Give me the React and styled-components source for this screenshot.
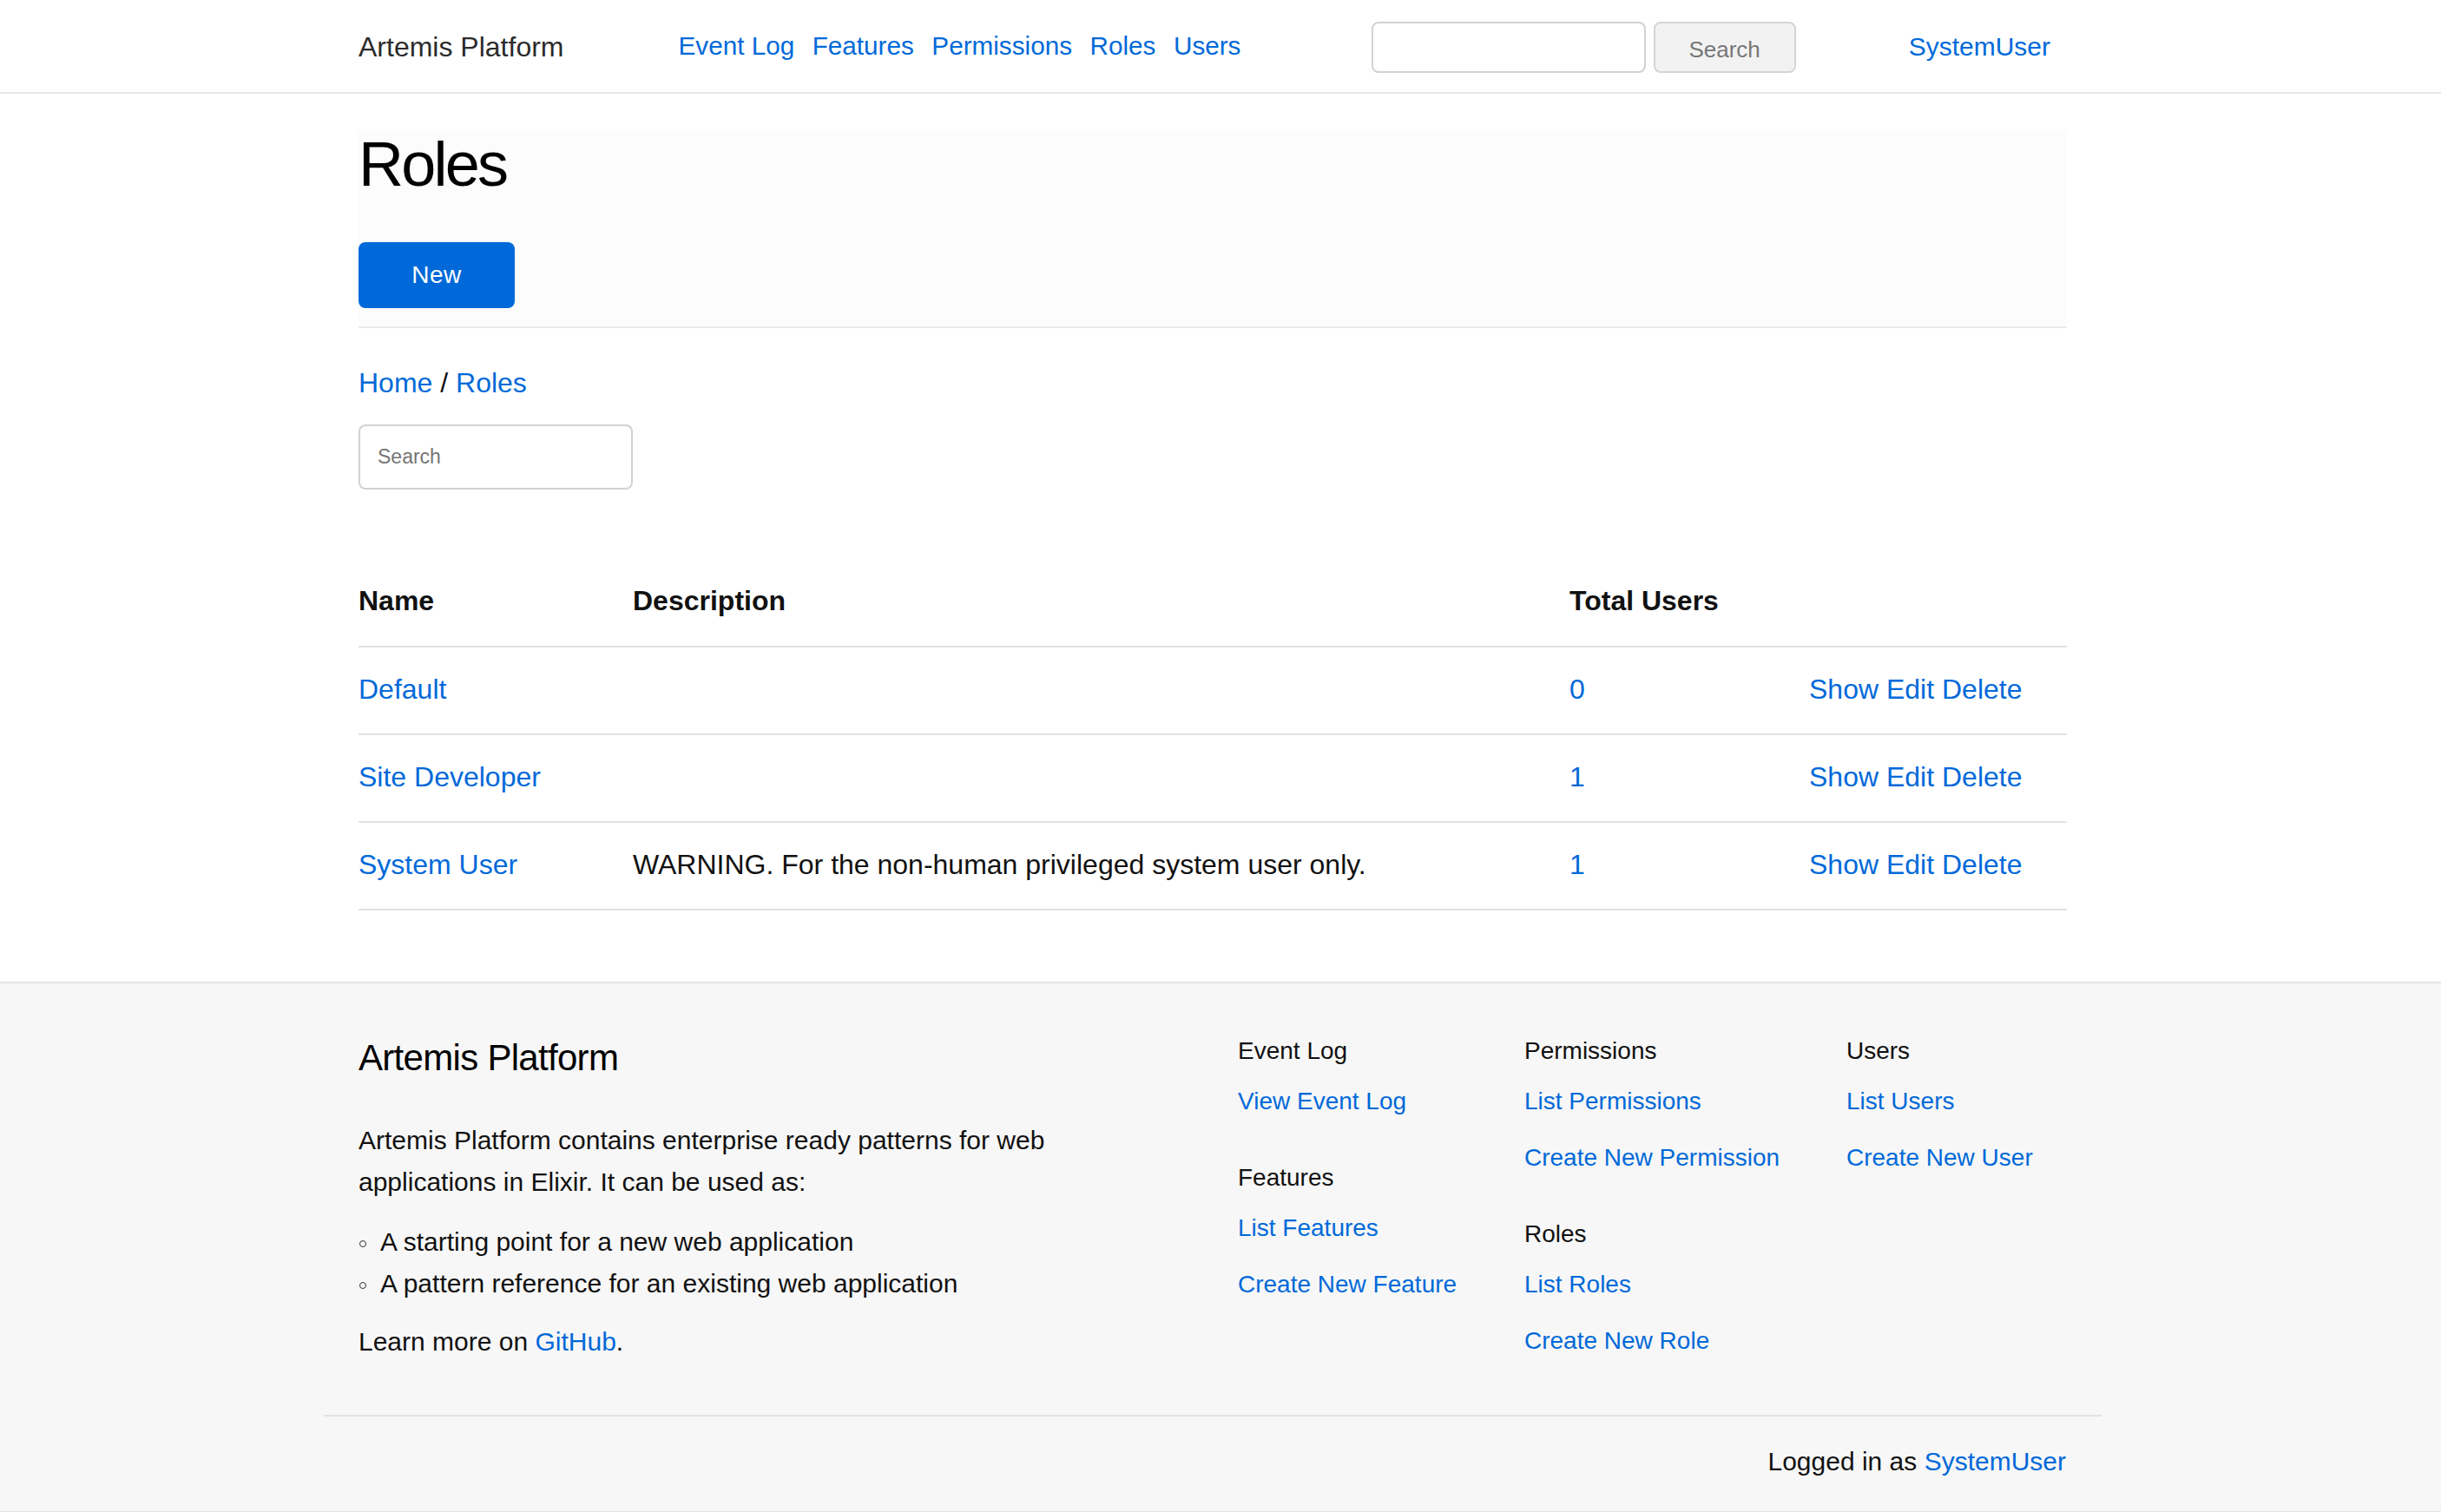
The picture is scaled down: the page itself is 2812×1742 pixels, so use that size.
import React from "react";
import styled, { createGlobalStyle } from "styled-components";

const BLUE = "#0069d9";

const GlobalStyle = createGlobalStyle`
  body {
    margin: 0;
    background: #fff;
    color: #111;
    font-family: "Liberation Sans", Arial, Helvetica, sans-serif;
  }
  * { box-sizing: border-box; }
  a { color: ${BLUE}; text-decoration: none; }
`;

const Band = styled.div`
  padding-right: 18px;
`;

const HeaderBar = styled(Band)`
  height: 108px;
  border-bottom: 2px solid #e6e6e6;
  background: #fff;
`;

const Container = styled.div`
  max-width: 2048px;
  margin: 0 auto;
  padding: 0 40px;
`;

const HeaderRow = styled(Container)`
  display: flex;
  align-items: center;
  height: 106px;
`;

const Brand = styled.a`
  font-size: 32px;
  color: #2b2b2b;
  white-space: nowrap;
  padding-top: 2px;
`;

const Nav = styled.nav`
  display: flex;
  gap: 20.5px;
  margin-left: 132px;
`;

const NavLink = styled.a`
  font-size: 29.7px;
`;

const SearchForm = styled.form`
  display: flex;
  gap: 9px;
  margin-left: auto;
  padding-top: 3px;
`;

const HeaderInput = styled.input`
  width: 316px;
  height: 59px;
  border: 2px solid #d2d2d2;
  border-radius: 8px;
  background: #fff;
  font-size: 26px;
`;

const HeaderButton = styled.button`
  width: 164px;
  height: 59px;
  border: 2px solid #d4d4d4;
  border-radius: 8px;
  background: #f2f2f2;
  color: #777;
  font-family: inherit;
  font-size: 26px;
  padding-top: 6px;
`;

const UserLink = styled.a`
  font-size: 30px;
  margin-left: 130px;
  margin-right: 19px;
  padding-top: 2px;
`;

const Main = styled(Band)`
  padding-top: 41px;
`;

const Hero = styled.section`
  background: #fcfcfc;
  border-bottom: 2px solid #ebebeb;
  padding-bottom: 21px;
`;

const Title = styled.h1`
  margin: 0;
  font-size: 72px;
  line-height: 80px;
  font-weight: 400;
  letter-spacing: -2.8px;
  color: #000;
`;

const PrimaryButton = styled.a`
  display: inline-flex;
  align-items: center;
  justify-content: center;
  margin-top: 50px;
  width: 180px;
  height: 76px;
  border-radius: 8px;
  background: ${BLUE};
  color: #fff;
  font-size: 28px;
  letter-spacing: 0.5px;
`;

const Breadcrumb = styled.div`
  margin-top: 39px;
  font-size: 32px;
  line-height: 48px;
  color: #111;
`;

const FilterInput = styled.input`
  display: block;
  margin-top: 24px;
  width: 316px;
  height: 75px;
  border: 2px solid #d2d2d2;
  border-radius: 8px;
  padding: 0 20px;
  font-family: inherit;
  font-size: 23px;
  color: #111;
  &::placeholder { color: #757575; }
`;

const Table = styled.table`
  width: 100%;
  margin: 80px 0 82px;
  border-collapse: collapse;
  table-layout: fixed;
  font-size: 32px;
`;

const Th = styled.th`
  text-align: left;
  font-weight: 700;
  color: #111;
  padding: 28px 0 32px;
  line-height: 40px;
  border-bottom: 2px solid #e2e2e2;
`;

const Td = styled.td`
  padding: 28px 0 31px;
  line-height: 40px;
  border-bottom: 2px solid #e2e2e2;
  color: #111;
  white-space: nowrap;
`;

const FooterBar = styled(Band)`
  background: #f7f7f7;
  border-top: 2px solid #e6e6e6;
  border-bottom: 2px solid #e3e3e3;
`;

const FooterWrap = styled.div`
  max-width: 2048px;
  margin: 0 auto;
`;

const FooterGrid = styled.div`
  display: grid;
  grid-template-columns: 1013px 330px 371px auto;
  padding: 58px 40px 60px;
`;

const About = styled.div``;

const FooterTitle = styled.h2`
  margin: 0;
  font-size: 42px;
  line-height: 56px;
  font-weight: 400;
  letter-spacing: -0.7px;
  color: #000;
`;

const Para = styled.p`
  margin: 43px 0 0;
  max-width: 880px;
  font-size: 30px;
  line-height: 48px;
`;

const Bullets = styled.ul`
  list-style: none;
  margin: 21px 0 0;
  padding: 0;
  font-size: 30px;
  line-height: 48px;
`;

const Bullet = styled.li`
  display: flex;
  align-items: center;
  &::before {
    content: "";
    width: 6px;
    height: 6px;
    border: 1.5px solid #333;
    border-radius: 50%;
    margin: 4px 16px 0 1px;
  }
`;

const Learn = styled.p`
  margin: 19px 0 0;
  font-size: 30px;
  line-height: 48px;
`;

const LinkColumn = styled.div`
  display: flex;
  flex-direction: column;
`;

const Group = styled.div`
  display: flex;
  flex-direction: column;
  gap: 25px;
  & + & { margin-top: 48px; }
`;

const GroupTitle = styled.div`
  font-size: 28px;
  line-height: 40px;
  color: #111;
  margin-bottom: -7px;
`;

const FooterLink = styled.a`
  font-size: 28px;
  line-height: 40px;
`;

const BottomRow = styled.div`
  border-top: 2px solid #e2e2e2;
  padding: 32px 41px 37px;
  text-align: right;
  font-size: 30px;
  line-height: 40px;
  color: #111;
`;

const roles = [
  { name: "Default", description: "", users: 0 },
  { name: "Site Developer", description: "", users: 1 },
  {
    name: "System User",
    description: "WARNING. For the non-human privileged system user only.",
    users: 1,
  },
];

const footerColumns = [
  [
    { title: "Event Log", links: ["View Event Log"] },
    { title: "Features", links: ["List Features", "Create New Feature"] },
  ],
  [
    { title: "Permissions", links: ["List Permissions", "Create New Permission"] },
    { title: "Roles", links: ["List Roles", "Create New Role"] },
  ],
  [{ title: "Users", links: ["List Users", "Create New User"] }],
];

const App = () => {
  return (
    <>
      <GlobalStyle />
      <HeaderBar>
        <HeaderRow>
          <Brand href="#">Artemis Platform</Brand>
          <Nav>
            <NavLink href="#">Event Log</NavLink>
            <NavLink href="#">Features</NavLink>
            <NavLink href="#">Permissions</NavLink>
            <NavLink href="#">Roles</NavLink>
            <NavLink href="#">Users</NavLink>
          </Nav>
          <SearchForm onSubmit={(e) => e.preventDefault()}>
            <HeaderInput type="text" />
            <HeaderButton type="submit">Search</HeaderButton>
          </SearchForm>
          <UserLink href="#">SystemUser</UserLink>
        </HeaderRow>
      </HeaderBar>

      <Main>
        <Container>
          <Hero>
            <Title>Roles</Title>
            <PrimaryButton href="#">New</PrimaryButton>
          </Hero>

          <Breadcrumb>
            <a href="#">Home</a> / <a href="#">Roles</a>
          </Breadcrumb>

          <FilterInput type="text" placeholder="Search" />

          <Table>
            <colgroup>
              <col style={{ width: 316 }} />
              <col style={{ width: 1079 }} />
              <col style={{ width: 276 }} />
              <col />
            </colgroup>
            <thead>
              <tr>
                <Th>Name</Th>
                <Th>Description</Th>
                <Th>Total Users</Th>
                <Th />
              </tr>
            </thead>
            <tbody>
              {roles.map((role) => (
                <tr key={role.name}>
                  <Td>
                    <a href="#">{role.name}</a>
                  </Td>
                  <Td>{role.description}</Td>
                  <Td>
                    <a href="#">{role.users}</a>
                  </Td>
                  <Td>
                    <a href="#">Show</a> <a href="#">Edit</a> <a href="#">Delete</a>
                  </Td>
                </tr>
              ))}
            </tbody>
          </Table>
        </Container>
      </Main>

      <FooterBar>
        <FooterWrap>
          <FooterGrid>
            <About>
              <FooterTitle>Artemis Platform</FooterTitle>
              <Para>
                Artemis Platform contains enterprise ready patterns for web
                applications in Elixir. It can be used as:
              </Para>
              <Bullets>
                <Bullet>A starting point for a new web application</Bullet>
                <Bullet>A pattern reference for an existing web application</Bullet>
              </Bullets>
              <Learn>
                Learn more on <a href="#">GitHub</a>.
              </Learn>
            </About>
            {footerColumns.map((column, i) => (
              <LinkColumn key={i}>
                {column.map((group) => (
                  <Group key={group.title}>
                    <GroupTitle>{group.title}</GroupTitle>
                    {group.links.map((link) => (
                      <FooterLink key={link} href="#">
                        {link}
                      </FooterLink>
                    ))}
                  </Group>
                ))}
              </LinkColumn>
            ))}
          </FooterGrid>
          <BottomRow>
            Logged in as <a href="#">SystemUser</a>
          </BottomRow>
        </FooterWrap>
      </FooterBar>
    </>
  );
};

export default App;
